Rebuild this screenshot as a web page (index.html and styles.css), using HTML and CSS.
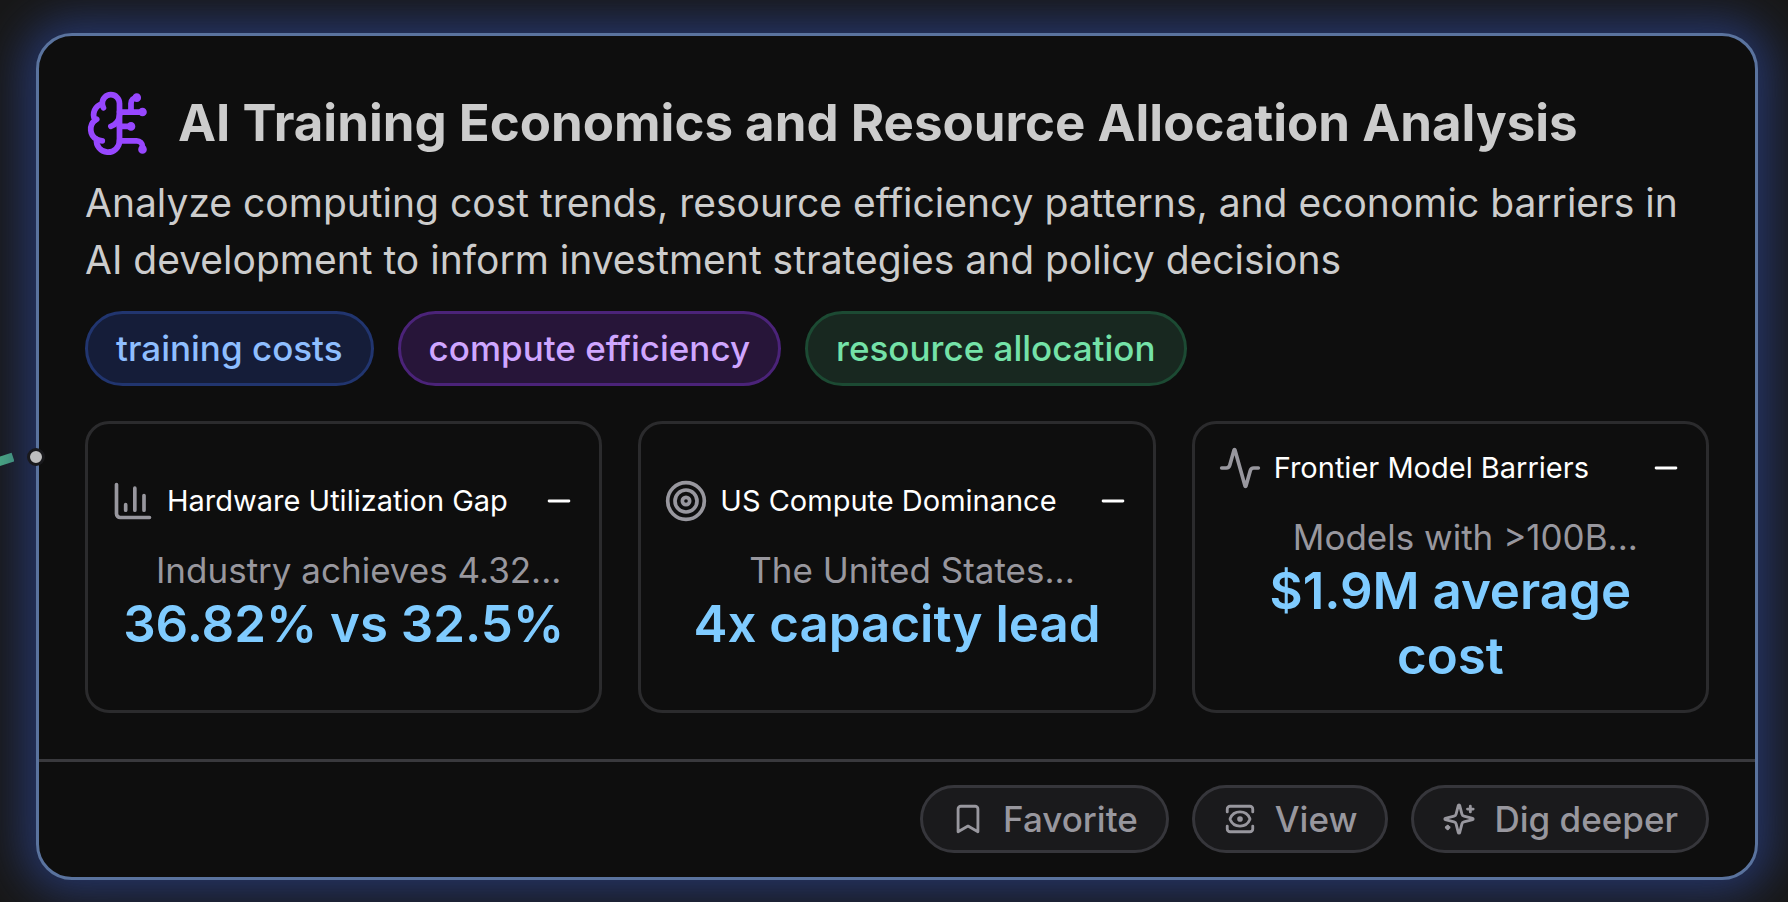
FILE: index.html
```html
<!DOCTYPE html>
<html lang="en">
<head>
    <meta charset="UTF-8">
    <meta name="viewport" content="width=device-width, initial-scale=1.0">
    <title>AI Training Economics</title>
    <link rel="stylesheet" href="styles.css">
</head>
<body>
    <main class="canvas">
        <!-- Edge coming in from the previous node -->
        <svg class="edge" viewBox="0 0 14 16" aria-hidden="true">
            <path d="M-2 11 L13 6" />
        </svg>

        <article class="node">
            <span class="handle"></span>

            <div class="node-body">
                <header class="node-header">
                    <svg class="node-icon" viewBox="0 0 24 24" aria-hidden="true">
                        <path d="M12 5a3 3 0 1 0-5.997.125 4 4 0 0 0-2.526 5.77 4 4 0 0 0 .556 6.588A4 4 0 1 0 12 18Z" />
                        <path d="M9 13a4.5 4.5 0 0 0 3-4" />
                        <path d="M6.003 5.125A3 3 0 0 0 6.401 6.5" />
                        <path d="M3.477 10.896a4 4 0 0 1 .585-.396" />
                        <path d="M6 18a4 4 0 0 1-1.967-.516" />
                        <path d="M12 13h4M12 18h6a2 2 0 0 1 2 2v1M12 8h8M16 8V5a2 2 0 0 1 2-2" />
                        <circle cx="16" cy="13" r=".5" />
                        <circle cx="18" cy="3" r=".5" />
                        <circle cx="20" cy="21" r=".5" />
                        <circle cx="20" cy="8" r=".5" />
                    </svg>
                    <h1>AI Training Economics and Resource Allocation Analysis</h1>
                </header>

                <p class="description">Analyze computing cost trends, resource efficiency patterns, and economic barriers in AI development to inform investment strategies and policy decisions</p>

                <ul class="tags">
                    <li class="tag tag-blue">training costs</li>
                    <li class="tag tag-purple">compute efficiency</li>
                    <li class="tag tag-green">resource allocation</li>
                </ul>

                <div class="metrics">
                    <section class="metric">
                        <div class="metric-header">
                            <svg class="metric-icon" viewBox="0 0 24 24" aria-hidden="true">
                                <path d="M3 3v16a2 2 0 0 0 2 2h16M18 17V9M13 17V5M8 17v-3" />
                            </svg>
                            <h2>Hardware Utilization Gap</h2>
                            <svg class="trend" viewBox="0 0 24 24" aria-hidden="true"><path d="M5 12h14" /></svg>
                        </div>
                        <p class="metric-text">Industry achieves 4.32...</p>
                        <p class="metric-value">36.82% vs 32.5%</p>
                    </section>

                    <section class="metric">
                        <div class="metric-header">
                            <svg class="metric-icon" viewBox="0 0 24 24" aria-hidden="true">
                                <circle cx="12" cy="12" r="10" />
                                <circle cx="12" cy="12" r="6" />
                                <circle cx="12" cy="12" r="2" />
                            </svg>
                            <h2>US Compute Dominance</h2>
                            <svg class="trend" viewBox="0 0 24 24" aria-hidden="true"><path d="M5 12h14" /></svg>
                        </div>
                        <p class="metric-text">The United States...</p>
                        <p class="metric-value">4x capacity lead</p>
                    </section>

                    <section class="metric">
                        <div class="metric-header">
                            <svg class="metric-icon" viewBox="0 0 24 24" aria-hidden="true">
                                <path d="M22 12h-2.48a2 2 0 0 0-1.93 1.46l-2.35 8.36a.25.25 0 0 1-.48 0L9.24 2.18a.25.25 0 0 0-.48 0l-2.35 8.36A2 2 0 0 1 4.49 12H2" />
                            </svg>
                            <h2>Frontier Model Barriers</h2>
                            <svg class="trend" viewBox="0 0 24 24" aria-hidden="true"><path d="M5 12h14" /></svg>
                        </div>
                        <p class="metric-text">Models with &gt;100B...</p>
                        <p class="metric-value">$1.9M average cost</p>
                    </section>
                </div>
            </div>

            <footer class="node-footer">
                <button type="button">
                    <svg viewBox="0 0 24 24" aria-hidden="true">
                        <path d="m19 21-7-4-7 4V5a2 2 0 0 1 2-2h10a2 2 0 0 1 2 2v16z" />
                    </svg>
                    Favorite
                </button>
                <button type="button">
                    <svg viewBox="0 0 24 24" aria-hidden="true">
                        <path d="M21 17v2a2 2 0 0 1-2 2H5a2 2 0 0 1-2-2v-2M21 7V5a2 2 0 0 0-2-2H5a2 2 0 0 0-2 2v2" />
                        <circle cx="12" cy="12" r="1" />
                        <path d="M18.944 12.33a1 1 0 0 0 0-.66 7.5 7.5 0 0 0-13.888 0 1 1 0 0 0 0 .66 7.5 7.5 0 0 0 13.888 0" />
                    </svg>
                    View
                </button>
                <button type="button">
                    <svg viewBox="0 0 24 24" aria-hidden="true">
                        <path d="M9.937 15.5A2 2 0 0 0 8.5 14.063l-6.135-1.582a.5.5 0 0 1 0-.962L8.5 9.936A2 2 0 0 0 9.937 8.5l1.582-6.135a.5.5 0 0 1 .963 0L14.063 8.5A2 2 0 0 0 15.5 9.937l6.135 1.581a.5.5 0 0 1 0 .964L15.5 14.063a2 2 0 0 0-1.437 1.437l-1.582 6.135a.5.5 0 0 1-.963 0z" />
                        <path d="M20 3v4M22 5h-4M4 17v2M5 18H3" />
                    </svg>
                    Dig deeper
                </button>
            </footer>
        </article>
    </main>
</body>
</html>
```
FILE: styles.css
```css
/* General page styles */
* {
    box-sizing: border-box;
}

body {
    margin: 0;
    background-color: #181818;
    color: #cccccc;
    font-family: Inter, sans-serif;
}

h1, h2, p, ul {
    margin: 0;
    padding: 0;
}

svg {
    flex-shrink: 0;
    fill: none;
    stroke: currentColor;
    stroke-width: 2;
    stroke-linecap: round;
    stroke-linejoin: round;
}

.canvas {
    position: relative;
    padding: 33px 30px 22px 36px;
    overflow: hidden;
}

/* Node card */
.node {
    position: relative;
    border: 3px solid #5a739e;
    border-radius: 36px;
    background-color: #0e0e0e;
    box-shadow: 0 0 44px 14px rgba(40, 60, 124, 0.8);
}

.node-body {
    padding: 47px 46px 46px;
}

.node-header {
    display: flex;
    align-items: center;
    gap: 24px;
}

.node-icon {
    width: 69px;
    height: 69px;
    color: #9747ff;
}

h1 {
    font-size: 51px;
    font-weight: 700;
    line-height: 80px;
}

.description {
    margin-top: 11px;
    font-size: 39px;
    line-height: 57px;
}

/* Tags */
.tags {
    display: flex;
    gap: 24px;
    margin-top: 23px;
    list-style: none;
}

.tag {
    padding: 14px 28px;
    border: 3px solid;
    border-radius: 38px;
    font-size: 35px;
    font-weight: 500;
    line-height: 41px;
}

.tag-blue {
    border-color: #21356f;
    background-color: #151d39;
    color: #8ebeff;
}

.tag-purple {
    border-color: #4b2379;
    background-color: #271539;
    color: #cfa6ff;
}

.tag-green {
    border-color: #1c4a33;
    background-color: #182820;
    color: #74e2a8;
}

/* Metric cards */
.metrics {
    display: grid;
    grid-template-columns: repeat(3, 1fr);
    gap: 36px;
    margin-top: 35px;
}

.metric {
    display: flex;
    flex-direction: column;
    justify-content: center;
    padding: 22px 23px;
    border: 3px solid #2b2b2d;
    border-radius: 24px;
}

.metric-header {
    display: flex;
    align-items: center;
    gap: 12px;
}

.metric-icon {
    width: 44px;
    height: 44px;
    color: #98979e;
}

h2 {
    color: #ffffff;
    font-size: 29px;
    font-weight: 400;
    line-height: 36px;
}

.trend {
    width: 34px;
    height: 34px;
    margin-left: auto;
    color: #ffffff;
}

.metric-text {
    margin-top: 26px;
    padding-left: 30px;
    color: #98979e;
    font-size: 35px;
    line-height: 42px;
    text-align: center;
}

.metric-value {
    color: #7fcbff;
    font-size: 51px;
    font-weight: 600;
    line-height: 65px;
    text-align: center;
}

/* Action buttons */
.node-footer {
    display: flex;
    justify-content: flex-end;
    gap: 23px;
    padding: 23px 46px 24px;
    border-top: 3px solid #39393d;
}

button {
    display: flex;
    align-items: center;
    gap: 18px;
    padding: 10px 28px;
    border: 3px solid #36363b;
    border-radius: 34px;
    background-color: #1a1a1c;
    color: #98979e;
    font-family: inherit;
    font-size: 35px;
    font-weight: 500;
    line-height: 42px;
    cursor: pointer;
}

button:hover {
    background-color: #26262a;
}

button svg {
    width: 34px;
    height: 34px;
}

/* Connection */
.handle {
    position: absolute;
    top: 50%;
    left: -3px;
    width: 18px;
    height: 18px;
    border: 3px solid #19191c;
    border-radius: 50%;
    background-color: #bebebe;
    transform: translate(-50%, -50%);
}

.edge {
    position: absolute;
    top: 50%;
    left: 0;
    width: 14px;
    height: 16px;
    color: #4caf82;
    stroke-linecap: butt;
    stroke-width: 9;
}
```
